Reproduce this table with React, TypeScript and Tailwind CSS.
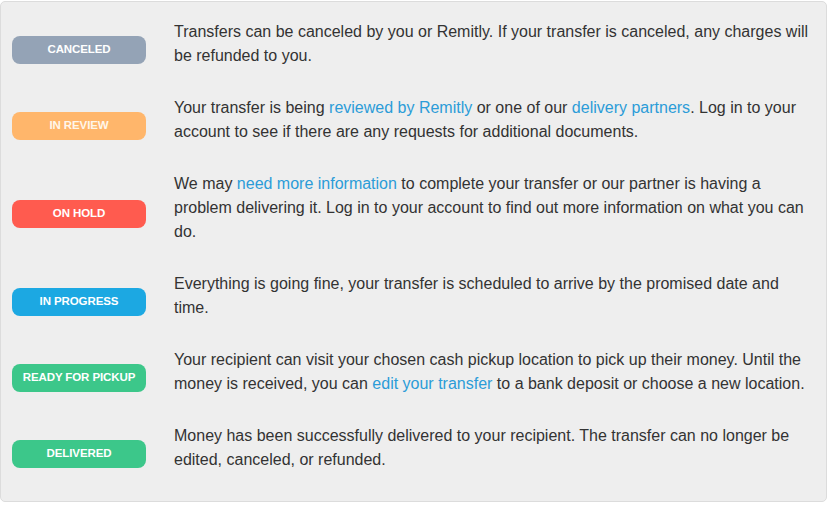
const link = "text-[#2b9cd8]";

type Row = {
  label: string;
  badge: string;
  text: React.ReactNode;
};

const rows: Row[] = [
  {
    label: "CANCELED",
    badge: "bg-[#94a3b6] text-white",
    text: (
      <>
        Transfers can be canceled by you or Remitly. If your transfer is canceled, any charges will
        be refunded to you.
      </>
    ),
  },
  {
    label: "IN REVIEW",
    badge: "bg-[#ffb66b] text-[#fff6ea]",
    text: (
      <>
        Your transfer is being <span className={link}>reviewed by Remitly</span> or one of our{" "}
        <span className={link}>delivery partners</span>. Log in to your account to see if there are
        any requests for additional documents.
      </>
    ),
  },
  {
    label: "ON HOLD",
    badge: "bg-[#ff5b4f] text-white",
    text: (
      <>
        We may <span className={link}>need more information</span> to complete your transfer or our
        partner is having a problem delivering it. Log in to your account to find out more
        information on what you can do.
      </>
    ),
  },
  {
    label: "IN PROGRESS",
    badge: "bg-[#1ca8e2] text-white",
    text: (
      <>
        Everything is going fine, your transfer is scheduled to arrive by the promised date and
        time.
      </>
    ),
  },
  {
    label: "READY FOR PICKUP",
    badge: "bg-[#3cc78a] text-white",
    text: (
      <>
        Your recipient can visit your chosen cash pickup location to pick up their money. Until the
        money is received, you can <span className={link}>edit your transfer</span> to a bank
        deposit or choose a new location.
      </>
    ),
  },
  {
    label: "DELIVERED",
    badge: "bg-[#3cc78a] text-white",
    text: (
      <>
        Money has been successfully delivered to your recipient. The transfer can no longer be
        edited, canceled, or refunded.
      </>
    ),
  },
];

export default function App() {
  return (
    <div className="h-[505px] w-[830px] bg-white pt-px font-['Liberation_Sans',Arial,sans-serif]">
      <div className="flex h-[501px] w-[827px] flex-col gap-[28px] rounded-[5px] border border-[#dcdcdc] bg-[#eeeeee] pb-[30px] pl-[11px] pr-[12px] pt-[18px]">
        {rows.map((r) => (
          <div key={r.label} className="flex items-center gap-[28px]">
            <div
              className={`mt-[12px] flex h-[28px] w-[134px] shrink-0 items-center justify-center rounded-[8px] text-[11.5px] font-bold tracking-[-0.1px] ${r.badge}`}
            >
              {r.label}
            </div>
            <p className="text-[16px] leading-[24px] text-[#333333]">{r.text}</p>
          </div>
        ))}
      </div>
    </div>
  );
}
